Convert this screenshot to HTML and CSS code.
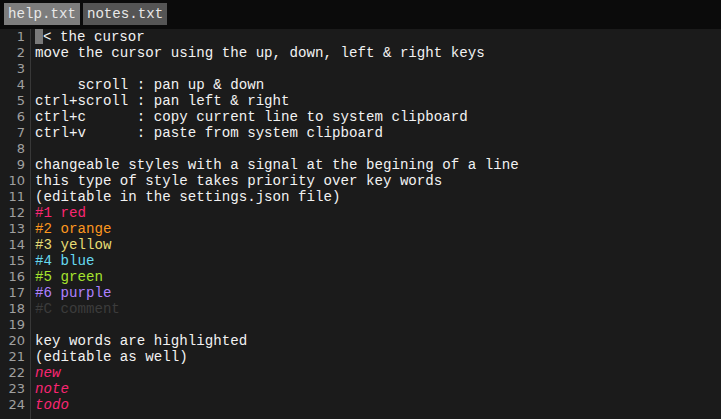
FILE: index.html
```html
<!DOCTYPE html>
<html>
<head>
<meta charset="utf-8">
<link rel="stylesheet" href="styles.css">
</head>
<body>
<div class="app">
  <div class="tabbar">
    <div class="tab active">help.txt</div>
    <div class="tab">notes.txt</div>
  </div>
  <div class="editor">
    <div class="gutter">
      <div>1</div><div>2</div><div>3</div><div>4</div><div>5</div><div>6</div><div>7</div><div>8</div><div>9</div><div>10</div><div>11</div><div>12</div><div>13</div><div>14</div><div>15</div><div>16</div><div>17</div><div>18</div><div>19</div><div>20</div><div>21</div><div>22</div><div>23</div><div>24</div>
    </div>
    <div class="code">
      <div class="line"><span class="cursor"> </span>&lt; the cursor</div>
      <div class="line">move the cursor using the up, down, left &amp; right keys</div>
      <div class="line"> </div>
      <div class="line">     scroll : pan up &amp; down</div>
      <div class="line">ctrl+scroll : pan left &amp; right</div>
      <div class="line">ctrl+c      : copy current line to system clipboard</div>
      <div class="line">ctrl+v      : paste from system clipboard</div>
      <div class="line"> </div>
      <div class="line">changeable styles with a signal at the begining of a line</div>
      <div class="line">this type of style takes priority over key words</div>
      <div class="line">(editable in the settings.json file)</div>
      <div class="line c-red">#1 red</div>
      <div class="line c-orange">#2 orange</div>
      <div class="line c-yellow">#3 yellow</div>
      <div class="line c-blue">#4 blue</div>
      <div class="line c-green">#5 green</div>
      <div class="line c-purple">#6 purple</div>
      <div class="line c-comment">#C comment</div>
      <div class="line"> </div>
      <div class="line">key words are highlighted</div>
      <div class="line">(editable as well)</div>
      <div class="line kw">new</div>
      <div class="line kw">note</div>
      <div class="line kw">todo</div>
    </div>
  </div>
</div>
</body>
</html>
```

FILE: styles.css
```css
html, body {
  margin: 0;
  padding: 0;
  height: 100%;
  background: #1b1b1b;
  overflow: hidden;
}
.app {
  display: flex;
  flex-direction: column;
  height: 100%;
  font-family: "Courier New", "Nimbus Mono PS", "FreeMono", "Liberation Mono", monospace;
  font-size: 14.15px;
  color: #f2f2f2;
}
.tabbar {
  display: flex;
  gap: 3px;
  padding: 3px 4px 4px;
  background: #0b0b0b;
  height: 22px;
}
.tab {
  display: flex;
  align-items: center;
  padding: 0 4px;
  background: #555555;
  color: #e8e8e8;
  height: 22px;
}
.tab.active {
  background: #7d7d7d;
}
.editor {
  display: flex;
  flex: 1;
  background: #1b1b1b;
}
.gutter {
  width: 25px;
  padding-right: 5px;
  border-right: 1px solid #383838;
  text-align: right;
  color: #a0a0a0;
  font-family: "DejaVu Sans", "Verdana", sans-serif;
  font-size: 13px;
  line-height: 16px;
}
.code {
  padding-left: 4px;
  line-height: 16px;
}
.line {
  height: 16px;
  white-space: pre;
}
.cursor {
  display: inline-block;
  background: #7a7a7a;
  width: 8px;
  height: 15px;
  vertical-align: top;
}
.c-red { color: #f92672; }
.c-orange { color: #fd971f; }
.c-yellow { color: #e6db74; }
.c-blue { color: #66d9ef; }
.c-green { color: #a6e22e; }
.c-purple { color: #ae81ff; }
.c-comment { color: #3c3c3c; }
.kw { color: #f92672; font-style: italic; }
```
